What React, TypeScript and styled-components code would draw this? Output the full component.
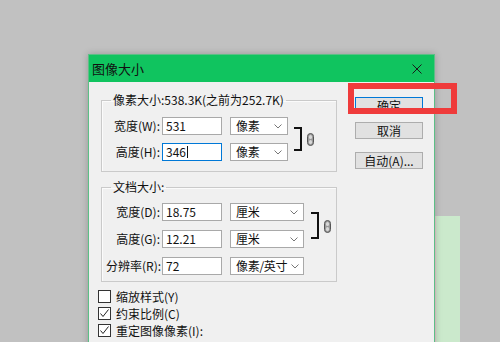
import styled, { createGlobalStyle } from "styled-components";

const GlobalStyle = createGlobalStyle`
  html, body {
    margin: 0;
    padding: 0;
    background: #c1c1c1;
  }
  * {
    box-sizing: border-box;
  }
`;

const Desk = styled.div`
  position: relative;
  width: 500px;
  height: 342px;
  overflow: hidden;
  background: #c1c1c1;
  padding: 54px 0 0 88px;
  font-family: "Noto Sans CJK SC", "Noto Sans", sans-serif;
  font-size: 12px;
  color: #111;
`;

const BackWindow = styled.div`
  position: absolute;
  left: 435px;
  top: 216px;
  width: 25px;
  height: 126px;
  background: #cbe9cc;
  border-left: 1px solid #e6c9cf;
`;

const Dialog = styled.div`
  position: relative;
  z-index: 1;
  width: 347px;
  height: 320px;
  background: #f0f0f0;
  border: 1px solid #5cbf86;
  box-shadow: 0 0 7px rgba(0, 0, 0, 0.22);
`;

const TitleBar = styled.div`
  height: 27px;
  background: #10c45f;
  display: flex;
  align-items: center;
  justify-content: space-between;
  padding: 0 12px 0 3px;
  font-size: 13px;
  line-height: 16px;
  color: #111;
`;

const Body = styled.div`
  display: flex;
  align-items: flex-start;
  padding-left: 8px;
`;

const LeftCol = styled.div`
  width: 241px;
  display: flex;
  flex-direction: column;
`;

const Group = styled.fieldset<{ $top: number; $pad: string }>`
  margin: ${p => p.$top}px 0 0 4px;
  width: 236px;
  min-width: 0;
  padding: ${p => p.$pad};
  border: 1px solid #cacaca;
  box-shadow: inset 1px 1px 0 #fbfbfb;
`;

const Legend = styled.legend`
  margin-left: 5px;
  padding: 0 2px;
  line-height: 16px;
  font-size: 12px;
`;

const Linked = styled.div`
  display: flex;
  align-items: center;
`;

const Rows = styled.div<{ $gap: number }>`
  display: flex;
  flex-direction: column;
  gap: ${p => p.$gap}px;
`;

const Row = styled.div<{ $top?: number }>`
  display: flex;
  align-items: center;
  height: 18px;
  margin-top: ${p => p.$top ?? 0}px;
`;

const Label = styled.span`
  width: 54px;
  margin-right: 2px;
  text-align: right;
  white-space: nowrap;
  line-height: 16px;
`;

const Field = styled.div<{ $focus?: boolean }>`
  width: 60px;
  height: 18px;
  background: #fff;
  border: 1px solid ${p => (p.$focus ? "#0078d7" : "#a9a9a9")};
  padding-left: 3px;
  display: flex;
  align-items: center;
  line-height: 16px;
`;

const Caret = styled.span`
  display: inline-block;
  width: 1px;
  height: 12px;
  background: #111;
  margin-left: 1px;
`;

const Select = styled.div<{ $w: number }>`
  width: ${p => p.$w}px;
  height: 18px;
  margin-left: 8px;
  background: #fff;
  border: 1px solid #a9a9a9;
  padding: 0 5px 0 5px;
  display: flex;
  align-items: center;
  justify-content: space-between;
  gap: 4px;
  line-height: 16px;
  white-space: nowrap;
  span {
    letter-spacing: -0.3px;
  }
`;

const Bracket = styled.div<{ $h: number; $left: number }>`
  width: 8px;
  height: ${p => p.$h}px;
  margin-left: ${p => p.$left}px;
  border: 2px solid #111;
  border-left: none;
`;

const LinkIcon = styled.svg`
  margin-left: 5px;
  margin-top: 1px;
  flex: none;
`;

const Checks = styled.div`
  margin-top: 8px;
  margin-left: 1px;
  display: flex;
  flex-direction: column;
  gap: 4px;
`;

const CheckRow = styled.div`
  display: flex;
  align-items: center;
  gap: 5px;
  height: 13px;
  line-height: 16px;
`;

const Box = styled.span`
  width: 13px;
  height: 13px;
  flex: none;
  background: #fff;
  border: 1px solid #333;
  display: flex;
  align-items: center;
  justify-content: center;
`;

const RightCol = styled.div`
  margin-left: 17px;
  padding-top: 15px;
  display: flex;
  flex-direction: column;
`;

const Button = styled.div<{ $default?: boolean; $top?: number }>`
  width: 68px;
  height: 17px;
  margin-top: ${p => p.$top ?? 0}px;
  background: #e1e1e1;
  border: 1px solid ${p => (p.$default ? "#0078d7" : "#adadad")};
  display: flex;
  align-items: center;
  justify-content: center;
  line-height: 15px;
  font-size: 12px;
`;

const Highlight = styled.div`
  position: absolute;
  z-index: 2;
  left: 348px;
  top: 83px;
  width: 109px;
  height: 31px;
  border: 6px solid #ef3b3b;
`;

const Chevron = () => (
  <svg width="8" height="5" viewBox="0 0 8 5" style={{ flex: "none" }}>
    <polyline points="0.5,0.5 4,4 7.5,0.5" fill="none" stroke="#777" strokeWidth="1" />
  </svg>
);

const Chain = () => (
  <LinkIcon width="7" height="13" viewBox="0 0 7 13">
    <rect x="0.5" y="0.5" width="6" height="12" rx="3" fill="#9a9a9a" stroke="#555" />
    <rect x="2" y="2" width="3" height="4" rx="1.5" fill="#d8d8d8" />
    <rect x="2" y="7" width="3" height="4" rx="1.5" fill="#d8d8d8" />
  </LinkIcon>
);

const Tick = () => (
  <svg width="11" height="11" viewBox="0 0 11 11">
    <polyline points="1.5,5.5 4,8.5 9.5,1.5" fill="none" stroke="#222" strokeWidth="1" />
  </svg>
);

type FieldRowProps = {
  label: string;
  value: string;
  unit: string;
  selW: number;
  focus?: boolean;
  top?: number;
};

const FieldRow = ({ label, value, unit, selW, focus, top }: FieldRowProps) => (
  <Row $top={top}>
    <Label>{label}</Label>
    <Field $focus={focus}>
      {value}
      {focus && <Caret />}
    </Field>
    <Select $w={selW}>
      <span>{unit}</span>
      <Chevron />
    </Select>
  </Row>
);

const checks = [
  { text: "缩放样式(Y)", on: false },
  { text: "约束比例(C)", on: true },
  { text: "重定图像像素(I):", on: true },
];

const App = () => {
  return (
    <Desk>
      <GlobalStyle />
      <BackWindow />
      <Dialog>
        <TitleBar>
          <span>图像大小</span>
          <svg width="10" height="10" viewBox="0 0 10 10">
            <path d="M0.5 0.5 L9.5 9.5 M9.5 0.5 L0.5 9.5" stroke="#1a1a1a" strokeWidth="1" />
          </svg>
        </TitleBar>
        <Body>
          <LeftCol>
            <Group $top={10} $pad="9px 0 10px 4px">
              <Legend>像素大小:538.3K(之前为252.7K)</Legend>
              <Linked>
                <Rows $gap={8}>
                  <FieldRow label="宽度(W):" value="531" unit="像素" selW={58} />
                  <FieldRow label="高度(H):" value="346" unit="像素" selW={58} focus />
                </Rows>
                <Bracket $h={24} $left={6} />
                <Chain />
              </Linked>
            </Group>
            <Group $top={7} $pad="8px 0 6px 4px">
              <Legend>文档大小:</Legend>
              <Linked>
                <Rows $gap={9}>
                  <FieldRow label="宽度(D):" value="18.75" unit="厘米" selW={74} />
                  <FieldRow label="高度(G):" value="12.21" unit="厘米" selW={74} />
                </Rows>
                <Bracket $h={27} $left={7} />
                <Chain />
              </Linked>
              <FieldRow label="分辨率(R):" value="72" unit="像素/英寸" selW={74} top={9} />
            </Group>
            <Checks>
              {checks.map(c => (
                <CheckRow key={c.text}>
                  <Box>{c.on && <Tick />}</Box>
                  <span>{c.text}</span>
                </CheckRow>
              ))}
            </Checks>
          </LeftCol>
          <RightCol>
            <Button $default>确定</Button>
            <Button $top={8}>取消</Button>
            <Button $top={13}>自动(A)...</Button>
          </RightCol>
        </Body>
      </Dialog>
      <Highlight />
    </Desk>
  );
};

export default App;
